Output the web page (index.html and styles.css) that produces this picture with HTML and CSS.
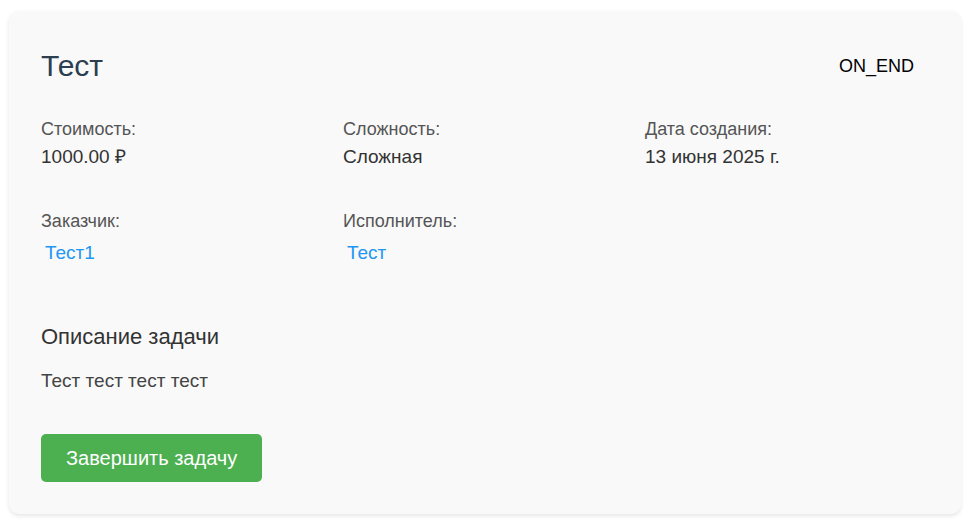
FILE: index.html
```html
<!DOCTYPE html>
<html lang="ru">
<head>
<meta charset="utf-8">
<meta name="viewport" content="width=device-width, initial-scale=1">
<title>Тест</title>
<link rel="stylesheet" href="styles.css">
</head>
<body>
<main class="card">
  <header class="header">
    <h1 class="title">Тест</h1>
    <span class="status">ON_END</span>
  </header>
  <dl class="meta">
    <div class="item"><dt>Стоимость:</dt><dd>1000.00 ₽</dd></div>
    <div class="item"><dt>Сложность:</dt><dd>Сложная</dd></div>
    <div class="item"><dt>Дата создания:</dt><dd>13 июня 2025 г.</dd></div>
    <div class="item"><dt>Заказчик:</dt><dd><a class="user" href="#">Тест1</a></dd></div>
    <div class="item"><dt>Исполнитель:</dt><dd><a class="user" href="#">Тест</a></dd></div>
  </dl>
  <section class="description">
    <h2 class="subtitle">Описание задачи</h2>
    <p class="text">Тест тест тест тест</p>
  </section>
  <button class="finish" type="button">Завершить задачу</button>
</main>
</body>
</html>
```

FILE: styles.css
```css
* { box-sizing: border-box; }

body {
  margin: 0;
  padding: 11px 11px 8px 9px;
  background: #fff;
  font-family: "Liberation Sans", Arial, sans-serif;
  color: #000;
}

.card {
  padding: 32px;
  border-radius: 10px;
  background: #f9f9f9;
  box-shadow: 0 2px 4px rgba(0, 0, 0, 0.1);
}

.header {
  display: flex;
  justify-content: space-between;
  align-items: center;
  margin-bottom: 30px;
}

.title {
  margin: 0;
  font-size: 30px;
  line-height: 46px;
  font-weight: 400;
  color: #2c3e50;
}

.status {
  padding: 0 15px;
  font-size: 18px;
  line-height: 28px;
}

.meta {
  display: grid;
  grid-template-columns: repeat(3, 1fr);
  gap: 40px 18px;
  margin: 0 0 52px;
}

.item dt {
  margin-bottom: 4px;
  font-size: 18px;
  line-height: 20px;
  color: #555;
}

.item dd {
  margin: 0;
  font-size: 19px;
  line-height: 28px;
  color: #333;
}

.user {
  display: inline-block;
  padding: 4px;
  color: #2196f3;
  text-decoration: none;
}

.subtitle {
  margin: 0 0 16px;
  font-size: 22px;
  line-height: 28px;
  font-weight: 400;
  color: #333;
}

.text {
  margin: 0 0 39px;
  font-size: 19px;
  line-height: 28px;
  color: #444;
}

.finish {
  padding: 10px 25px;
  border: 0;
  border-radius: 5px;
  background: #4caf50;
  color: #fff;
  font-family: inherit;
  font-size: 20px;
  line-height: 28px;
  cursor: pointer;
}
```
